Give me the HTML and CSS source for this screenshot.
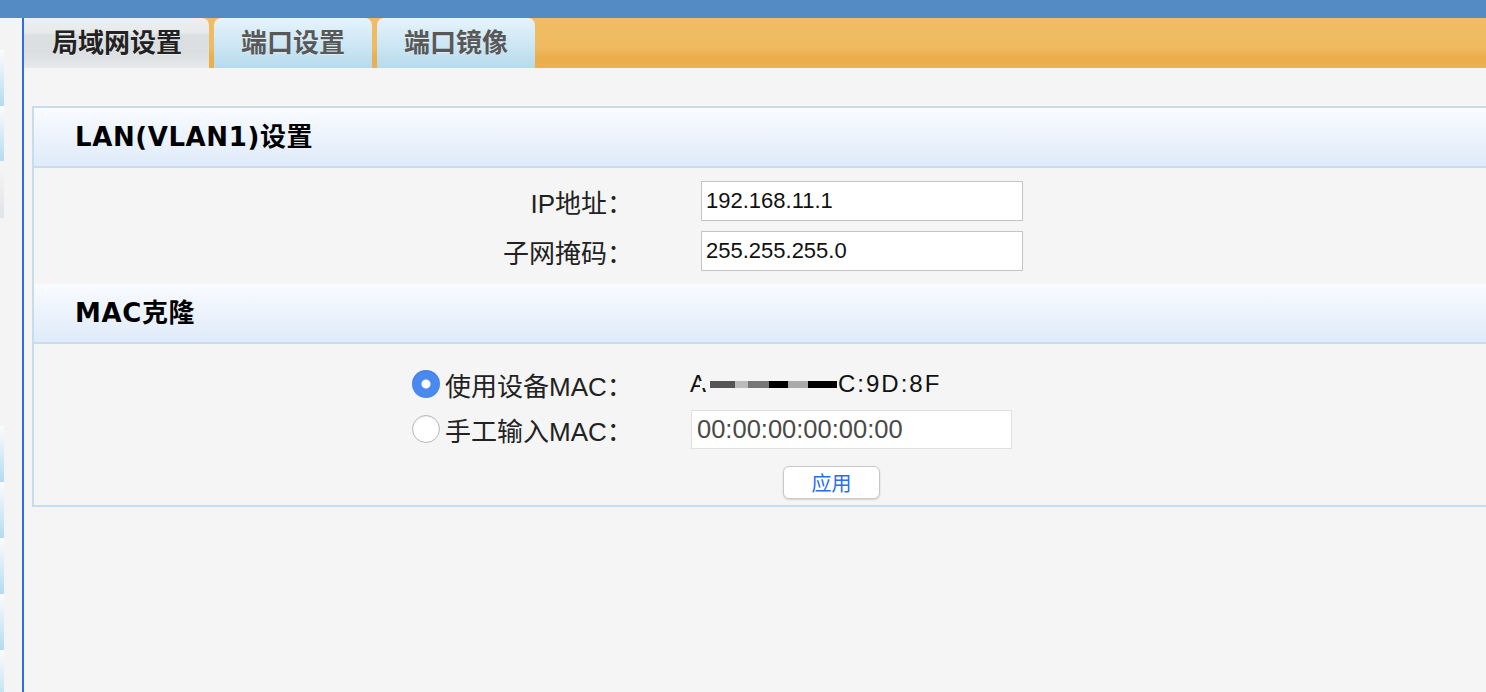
FILE: index.html
```html
<!DOCTYPE html>
<html lang="zh-CN">

<head>
    <meta charset="UTF-8">
    <meta name="viewport" content="width=device-width, initial-scale=1.0">
    <title>局域网设置</title>
    <link rel="stylesheet" href="styles.css">
</head>

<body>
    <div class="topbar"></div>
    <div class="main">
        <div class="sidebar">
            <div class="strip">
                <span class="seg seg-blue"></span>
                <span class="seg seg-blue seg-short"></span>
                <span class="seg seg-grey"></span>
                <span class="seg-gap"></span>
                <span class="seg seg-blue"></span>
                <span class="seg seg-blue"></span>
                <span class="seg seg-blue"></span>
                <span class="seg seg-blue"></span>
                <span class="seg seg-blue"></span>
            </div>
        </div>

        <div class="content">
            <div class="tabs">
                <div class="tab active">局域网设置</div>
                <div class="tab">端口设置</div>
                <div class="tab">端口镜像</div>
            </div>

            <div class="page">
                <div class="panel">
                    <div class="panel-head">LAN(VLAN1)设置</div>
                    <div class="section">
                        <div class="row">
                            <label class="label" for="ip">IP地址：</label>
                            <input class="field" type="text" id="ip" value="192.168.11.1">
                        </div>
                        <div class="row">
                            <label class="label" for="mask">子网掩码：</label>
                            <input class="field" type="text" id="mask" value="255.255.255.0">
                        </div>
                    </div>

                    <div class="panel-head">MAC克隆</div>
                    <div class="section mac">
                        <div class="row">
                            <input class="radio" type="radio" name="mac" id="mac-dev" checked>
                            <label class="mac-label" for="mac-dev">使用设备MAC：</label>
                            <span class="mac-value">A<span class="blur"></span>C:9D:8F</span>
                        </div>
                        <div class="row">
                            <input class="radio" type="radio" name="mac" id="mac-manual">
                            <label class="mac-label" for="mac-manual">手工输入MAC：</label>
                            <input class="field field-mac" type="text" value="00:00:00:00:00:00">
                        </div>
                        <div class="actions">
                            <button class="btn">应用</button>
                        </div>
                    </div>
                </div>
            </div>
        </div>
    </div>
</body>

</html>
```

FILE: styles.css
```css
* {
    margin: 0;
    padding: 0;
    box-sizing: border-box;
}

body {
    background-color: #f5f5f5;
    font-family: "Liberation Sans", "Noto Sans CJK SC", sans-serif;
    color: #222;
    height: 100vh;
    overflow: hidden;
}

.topbar {
    height: 18px;
    background-color: #548bc5;
}

.main {
    display: flex;
    height: calc(100vh - 18px);
}

/* Left menu edge */
.sidebar {
    width: 22px;
    background-color: #f4f4f4;
}

.strip {
    display: flex;
    flex-direction: column;
    width: 4px;
    padding-top: 32px;
}

.seg {
    height: 56px;
}

.seg-short {
    height: 55px;
}

.seg-blue {
    background: linear-gradient(#fbfdfe, #b4dbee);
}

.seg-grey {
    height: 57px;
    background: linear-gradient(#f6f6f6, #e1e4e8);
}

.seg-gap {
    height: 208px;
}

.content {
    flex: 1;
    border-left: 2px solid #2d6ee6;
    display: flex;
    flex-direction: column;
}

/* Tabs */
.tabs {
    display: flex;
    gap: 5px;
    height: 50px;
    background: linear-gradient(#f0bd64 0%, #efba60 60%, #ebae4b 78%, #ecb04f 100%);
}

.tab {
    padding: 0 27px;
    line-height: 50px;
    font-size: 26px;
    font-weight: bold;
    color: #585858;
    border-radius: 7px 7px 0 0;
    background: linear-gradient(#e6f4fb, #b6dbee);
    text-shadow: 0 1px 0 rgba(255, 255, 255, 0.4);
}

.tab.active {
    padding: 0 27px 0 28px;
    color: #222;
    border-radius: 0 7px 0 0;
    background: linear-gradient(#eceeef 0%, #e7e9eb 30%, #dcdfe2 34%, #dcdfe2 70%, #e7e9eb 100%);
}

.page {
    flex: 1;
    padding: 38px 0 0 8px;
}

/* Settings panel */
.panel {
    border: 2px solid #c9dcee;
    border-right: none;
}

.panel-head {
    height: 60px;
    padding-left: 41px;
    line-height: 58px;
    font-family: "DejaVu Sans", "Noto Sans CJK SC", sans-serif;
    font-size: 26px;
    font-weight: bold;
    letter-spacing: 0.6px;
    color: #000;
    background: linear-gradient(#f9fbff, #dfebf9);
    border-bottom: 2px solid #c9dcee;
}

.section {
    display: flex;
    flex-direction: column;
    gap: 10px;
    padding: 13px 0;
}

.row {
    display: flex;
    align-items: center;
    height: 40px;
}

.label {
    width: 599px;
    text-align: right;
    font-size: 26px;
    margin-right: 68px;
}

.field {
    width: 322px;
    height: 40px;
    padding: 0 4px;
    font-family: "Liberation Sans", sans-serif;
    font-size: 22px;
    color: #111;
    background-color: #fff;
    border: 1px solid #c4c4c4;
    outline: none;
}

/* MAC clone */
.section.mac {
    gap: 5px;
    padding: 20px 0 6px 378px;
}

.radio {
    appearance: none;
    -webkit-appearance: none;
    width: 28px;
    height: 28px;
    margin-right: 5px;
    border-radius: 50%;
    background-color: #fff;
    border: 1px solid #b8b8b8;
    box-shadow: inset 0 1px 2px rgba(0, 0, 0, 0.08);
}

.radio:checked {
    border: none;
    background: radial-gradient(circle, #fff 0, #fff 4px, #4a89f0 5px);
}

.mac-label {
    width: 245px;
    font-size: 26px;
}

.mac-value {
    display: flex;
    align-items: center;
    font-size: 24px;
    letter-spacing: 2px;
    color: #111;
}

.blur {
    display: inline-block;
    width: 146px;
    height: 26px;
    margin: 0 -8px 0 -8px;
    background:
        linear-gradient(90deg, #f5f5f5 0, #f5f5f5 7%, #555 7%, #555 24%, #bbb 24%, #bbb 33%, #777 33%, #777 47%, #000 47%, #000 60%, #aaa 60%, #aaa 74%, #000 74%, #000 94%, #f5f5f5 94%) center / 100% 7px no-repeat,
        linear-gradient(90deg, transparent 0, transparent 4%, #f5f5f5 4%, #f5f5f5 93%, transparent 93%) top / 100% 100% no-repeat;
}

.field-mac {
    width: 321px;
    height: 39px;
    margin-left: 1px;
    padding: 0 5px;
    font-size: 25.5px;
    color: #4a4a4a;
    border-color: #e0e0e0;
}

.actions {
    padding: 12px 0 0 371px;
}

.btn {
    width: 97px;
    height: 33px;
    font-family: "Noto Sans CJK SC", sans-serif;
    font-size: 20px;
    color: #2a6ef0;
    background-color: #fff;
    border: 1px solid #c8c8c8;
    border-radius: 6px;
    box-shadow: 0 1px 2px rgba(0, 0, 0, 0.15);
    cursor: pointer;
}
```
